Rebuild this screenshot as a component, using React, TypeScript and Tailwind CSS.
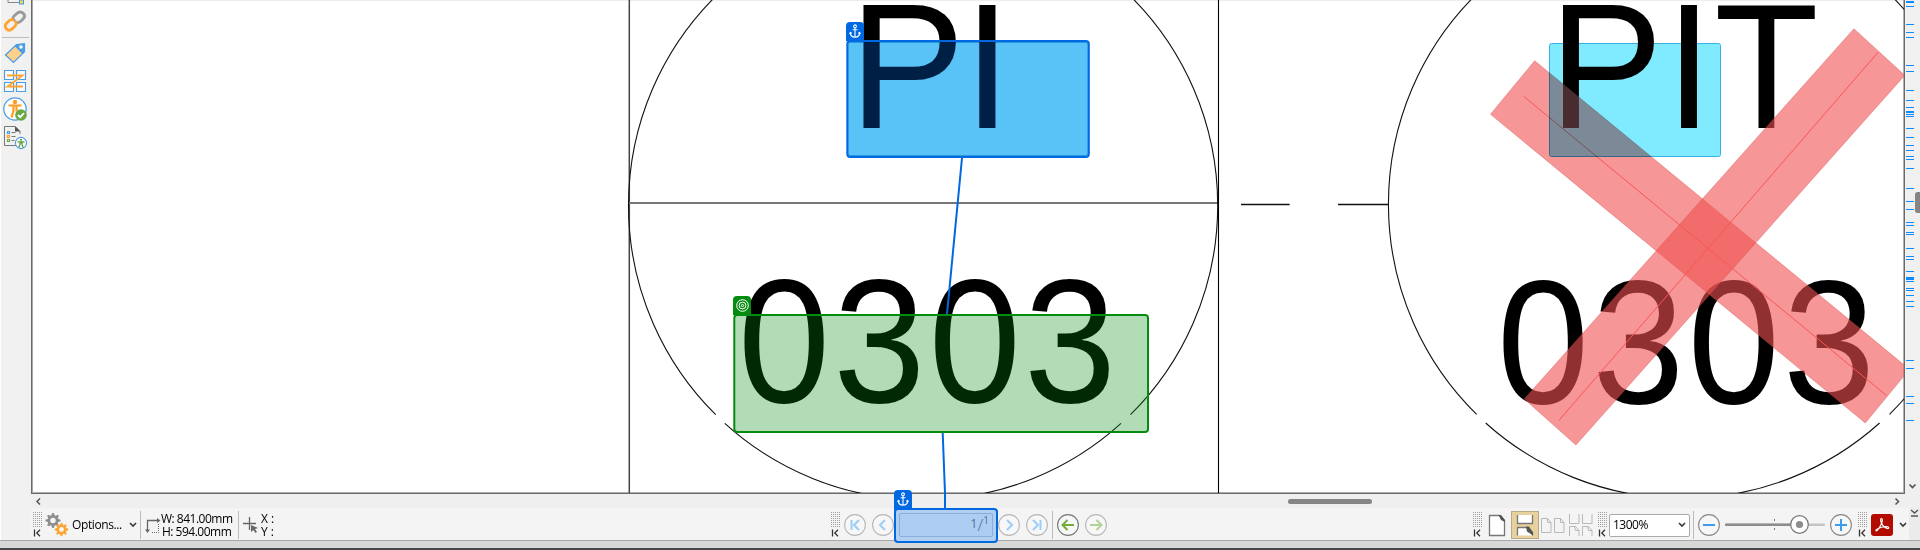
import React from 'react';

const RULER_MARKS: [number, number][] = [
  [1, 2], [6, 1], [24, 1], [32, 1], [37, 1], [65, 1], [71, 1], [90, 1], [100, 1], [107, 1],
  [111, 2], [114, 1], [116, 1], [128, 1], [137, 1], [145, 1], [150, 1], [156, 1], [159, 1],
  [168, 1], [188, 1], [201, 1], [209, 1], [222, 1], [225, 1], [232, 1], [234, 1], [248, 1],
  [256, 1], [259, 1], [271, 1], [277, 3], [281, 1], [288, 1], [290, 1], [295, 1], [301, 1],
  [306, 1], [360, 1], [368, 1], [396, 1], [403, 1], [420, 1],
];

function Anchor() {
  return (
    <svg width="12" height="15" viewBox="0 0 12 15" fill="none" stroke="#fff" strokeWidth="1.1">
      <circle cx="6" cy="2.3" r="1.4" />
      <path d="M6 3.7v9.6M3.6 5.8h4.8M1.2 8.6c.2 3 2 4.5 4.8 4.7 2.8-.2 4.6-1.700 4.800-4.700M.6 9.900l.7-1.500 1.500.8M11.400 9.900l-.7-1.500-1.500.8" />
    </svg>
  );
}

function Grip() {
  return (
    <svg className="shrink-0" width="10" height="32" viewBox="0 0 10 32">
      {[0, 1, 2, 3, 4, 5, 6, 7].map((r) =>
        [0, 1, 2, 3, 4].map((c) => (
          <rect key={`${r}-${c}`} x={c * 2} y={3 + r * 2} width="1" height="1" fill="#a0a0a0" />
        )),
      )}
      <path d="M1.500 20.500v7M7 20.800l-3.200 3.200L7 27.200" fill="none" stroke="#333" strokeWidth="1.300" />
    </svg>
  );
}

function Chevron({ className = '' }: { className?: string }) {
  return (
    <svg className={`shrink-0 ${className}`} width="8" height="8" viewBox="0 0 8 8" fill="none" stroke="#3c3c3c" strokeWidth="1.700">
      <path d="M1 2l3 3 3-3" />
    </svg>
  );
}

function RoundButton({ d, color, ring = '#b8b8b8', className = '' }: { d: string; color: string; ring?: string; className?: string }) {
  return (
    <svg className={`shrink-0 ${className}`} width="22" height="22" viewBox="0 0 22 22" fill="none">
      <circle cx="11" cy="11" r="10.400" fill="#f7f7f7" stroke={ring} strokeWidth="1.100" />
      <path d={d} stroke={color} strokeWidth="2" />
    </svg>
  );
}

function Sep({ className = '' }: { className?: string }) {
  return <div className={`h-7 w-px shrink-0 bg-[#bcbcbc] ${className}`} />;
}

function gearPath(cx: number, cy: number, r: number) {
  const pts: string[] = [];
  for (let i = 0; i < 32; i++) {
    const a = ((i - 0.5) / 32) * Math.PI * 2;
    const rad = i % 4 < 2 ? r : r * 0.72;
    pts.push(`${(cx + Math.cos(a) * rad).toFixed(2)} ${(cy + Math.sin(a) * rad).toFixed(2)}`);
  }
  const h = r * 0.36;
  return `M${pts.join('L')}ZM${cx - h} ${cy}a${h} ${h} 0 1 0 ${h * 2} 0a${h} ${h} 0 1 0 ${-h * 2} 0Z`;
}

function Sidebar() {
  return (
    <div className="w-[31px] shrink-0 border-l border-white bg-[#f1f1f1]">
      <svg width="30" height="155" viewBox="1 0 30 155" fill="none">
        <path d="M8 0v2.500h11" stroke="#888" />
        <rect x="19.500" y="0" width="4" height="4" fill="#ffd84d" stroke="#3f9ae8" />
        <g strokeWidth="2.800" strokeLinecap="round" transform="translate(0 .5)">
          <path d="M14.200 19.800c-1.800-1.600-1.600-3 .1-4.600l3-2.600c2-1.500 4.200-1.400 5.900.2 1.700 1.700 1.600 3.900 0 5.600l-2.800 2.600c-1.300 1.100-2.600 1.300-3.900.8" stroke="#9a9a9a" />
          <path d="M13 19.200c-1.500-.4-2.700 0-3.900 1.100l-2.600 2.500c-1.700 1.800-1.700 4 0 5.600 1.600 1.600 3.900 1.500 5.700 0l2.700-2.600c1.400-1.400 1.700-2.700.9-4" stroke="#ffa42e" />
        </g>
        <path d="M2 37.500h27" stroke="#bcbcbc" />
        <path d="M5.500 55L16.500 44.500l8-.8v8L13.500 62.500Z" fill="#ffd08a" stroke="#4a9de6" strokeWidth="1.200" />
        <path d="M14.500 46L16.500 44.500l8-.8v8L22.500 54Z" fill="#4a9de6" />
        <circle cx="21" cy="47" r="1.800" fill="#fff" />
        <g fill="#fafafa" stroke="#4a9de6" strokeWidth="1.100">
          <path d="M4.500 70.500h9v9h-9zM16.500 70.500h9v9h-9zM4.500 82.500h9v9h-9zM16.500 82.500h9v9h-9z" />
        </g>
        <path d="M7 75.500h15.500L7.500 86.500h15.500" stroke="#ffa42e" strokeWidth="1.800" />
        <circle cx="15" cy="109" r="11.200" fill="#fff" stroke="#4a9de6" strokeWidth="1.200" />
        <circle cx="15" cy="102" r="2.200" fill="#ff9c22" />
        <path d="M8.500 105.500h13M13.500 105.500v5l-2 7M16.500 105.500v6" stroke="#ff9c22" strokeWidth="2.200" />
        <circle cx="21" cy="115" r="5.800" fill="#6aa844" />
        <path d="M18 115l2.200 2.200 3.800-4" stroke="#fff" strokeWidth="1.800" />
        <path d="M15 126.500H4.500v19H17M20 131.500V134M15 126.500l5 5" stroke="#777" />
        <path d="M15 126l5.500 5.500H15Z" fill="#555" />
        <g strokeWidth="1.100">
          <path d="M7.500 131.500h2v2h-2z" stroke="#3f9ae8" />
          <path d="M7.500 135.500h2v2h-2z" stroke="#ff9c22" />
          <path d="M7.500 139.500h2v2h-2z" stroke="#6aa844" />
          <path d="M11.500 132.500h4M11.500 136.500h4M11.500 140.500h3" stroke="#777" />
        </g>
        <circle cx="21" cy="143" r="5.600" fill="#fff" stroke="#4a9de6" strokeWidth="1.100" />
        <circle cx="21" cy="139.800" r="1.100" fill="#5da33c" />
        <path d="M17.500 141.800h7M21 141.500v2M20 142v2.500l-1.200 3M22 142v2.500l1.200 3" stroke="#5da33c" strokeWidth="1.300" />
      </svg>
    </div>
  );
}

function Drawing() {
  return (
    <svg className="block" width="1871" height="493" viewBox="33 0 1871 493">
      <g fill="none" stroke="#111" strokeWidth="1.100">
        <path d="M629.300 0V493" stroke="#444" strokeWidth="1.500" />
        <path d="M1218.500 0V493" stroke="#000" />
        <path d="M629 203H1218" stroke="#777" strokeWidth="2" />
        <path d="M715.700 414.700A294.600 294.600 0 1 1 1130.500 414.700" />
        <path d="M724.800 423.300A294.600 294.600 0 0 0 1121 423.300" />
        <path d="M1476.600 414.300A294.600 294.600 0 1 1 1889.500 414.300" />
        <path d="M1485.700 423A294.600 294.600 0 0 0 1879.600 423" />
        <path d="M1241 204.500h48.600M1338 204.500h50" strokeWidth="1.300" />
      </g>
      <g className="font-['Liberation_Sans',Arial,sans-serif]" fontSize="179" fill="#000">
        <text transform="translate(849.200 128.300) scale(.97 1)" x="0 117.500">PI</text>
        <text transform="translate(738 402.200) scale(.925 .988)" x="0 103.100 206.200 309.300">0303</text>
        <text transform="translate(1549 128.300) scale(.955 1)" x="0 121.700 173">PIT</text>
        <text transform="translate(1497 403.200) scale(.925 .988)" x="0 103.100 206.200 309.300">0303</text>
      </g>
      <g fill="#f05050" fillOpacity=".6" stroke="#d04545" strokeOpacity=".35">
        <path d="M1534.700 60.700L1490.500 114.300L1865.300 423L1909.500 369.400Z" />
        <path d="M1853.900 28.700L1904.800 75.300L1575.900 445L1524.300 399Z" />
      </g>
      <path d="M1523.600 96.300L1886.700 395.700M1878 52.300L1559 420.300" stroke="#fb5555" fill="none" />
      <rect className="mix-blend-multiply" x="1549.500" y="43.500" width="171" height="113" rx="2" fill="#80eaff" stroke="#38b0e4" />
      <rect className="mix-blend-multiply" x="848" y="42.500" width="240" height="113" rx="2" fill="#80eaff" stroke="#38b0e4" />
      <rect x="847.300" y="41" width="241.500" height="116" rx="3" fill="#0068e5" fillOpacity=".3" stroke="#0068e0" strokeWidth="2" />
      <rect x="734.300" y="315" width="413.700" height="117" rx="3" fill="#008c0a" fillOpacity=".3" stroke="#058c10" strokeWidth="2" />
      <path d="M962 158L947 314M942.700 433L945 493" stroke="#0068e0" strokeWidth="2" />
    </svg>
  );
}

function LeftTools() {
  return (
    <div className="flex w-[798px] shrink-0 items-center">
      <Grip />
      <svg className="ml-[2px] shrink-0" width="24" height="24" viewBox="0 0 24 24" fillRule="evenodd">
        <path d={gearPath(8, 7.5, 7.600)} fill="#8e8e8e" />
        <path d={gearPath(16.500, 16.5, 6.800)} fill="#ffa42e" />
      </svg>
      <span className="ml-[3px] w-[52px] text-[12px] tracking-[-0.4px] whitespace-nowrap">Options...</span>
      <Chevron className="ml-[5px]" />
      <Sep className="ml-[3px]" />
      <svg className="ml-1 shrink-0" width="16" height="18" viewBox="0 0 16 18" fill="none" stroke="#666">
        <path d="M2.500 14V4.500H13" strokeWidth="1.300" />
        <path d="M12 2l3.500 2.500L12 7ZM0 13.500h5L2.500 17Z" fill="#666" stroke="none" />
        <path d="M13.500 8v8.500H6" strokeDasharray="1 1" />
      </svg>
      <div className="flex w-[77px] flex-col text-[12px] leading-[13px] tracking-[-0.5px] whitespace-nowrap">
        <span>W: 841.00mm</span>
        <span className="pl-px">H: 594.00mm</span>
      </div>
      <Sep />
      <svg className="ml-1 shrink-0" width="16" height="20" viewBox="0 0 16 20" fill="none" stroke="#666" strokeWidth="1.300">
        <path d="M6.500 2v13M0 8.500h13" />
        <path d="M8 10l7 3-3 1 2 3-1.500 1-2-3L8 17Z" fill="#666" stroke="none" />
      </svg>
      <div className="ml-[2px] flex flex-col text-[12px] leading-[13px]">
        <span>X :</span>
        <span>Y :</span>
      </div>
    </div>
  );
}

function PageNav() {
  return (
    <div className="flex w-[642px] shrink-0 items-center">
      <Grip />
      <RoundButton className="ml-[3px]" color="#9dcdf6" d="M7.500 6v10M15 6l-5 5 5 5" />
      <RoundButton className="ml-[6px]" color="#9dcdf6" d="M13 6l-5 5 5 5" />
      <div className="relative h-[35px] w-[104px] shrink-0 rounded border-2 border-[#0068e0] bg-[#b0cff3] p-[3px]">
        <div className="flex h-[24px] items-center justify-end rounded-[2px] border border-[#8baed6] bg-[#adcdf2] pr-[3px] text-[12.500px] text-[#56708f]">
          1<span className="text-[17px] font-light">/</span><sup className="text-[10px]">1</sup>
        </div>
        <div className="absolute top-[-20px] left-[-2px] flex h-[20px] w-[18px] items-center justify-center rounded-t bg-[#0068e0]">
          <Anchor />
        </div>
        <div className="absolute top-[-18px] left-[48px] h-[18px] w-[2px] bg-[#0068e0]" />
      </div>
      <RoundButton className="" color="#9dcdf6" d="M9 6l5 5-5 5" />
      <RoundButton className="ml-[6px]" color="#9dcdf6" d="M7 6l5 5-5 5M14.500 6v10" />
      <Sep className="ml-[4px]" />
      <RoundButton className="ml-[4px]" ring="#777" color="#72ad3c" d="M17 11H6M10.500 6L5.500 11l5 5" />
      <RoundButton className="ml-[6px]" color="#b4d398" d="M5 11h11M11.500 6l5 5-5 5" />
    </div>
  );
}

function ViewTools() {
  return (
    <div className="flex items-center">
      <Grip />
      <svg className="ml-[5px] shrink-0" width="18" height="23" viewBox="0 0 18 23">
        <path d="M1.500 1.500H12l4.500 5v15h-15Z" fill="#fff" stroke="#777" strokeWidth="1.300" />
        <path d="M10.500 1H13l4 5v2L13 6Z" fill="#555" />
      </svg>
      <div className="ml-[5px] flex h-7 w-7 shrink-0 items-center justify-center border border-[#b8ab8a] bg-[#e7d19c]">
        <svg width="18" height="24" viewBox="0 0 18 24">
          <path d="M1.500 2h15v8.500h-15Z" fill="#fff" />
          <path d="M1.500 2v8.500h15V2" fill="none" stroke="#777" strokeWidth="1.300" />
          <path d="M1.500 22.500V14.500h10l5 5v3" fill="#fff" stroke="#777" strokeWidth="1.300" />
          <path d="M10 13.500h3l4 6v3L11 18.500Z" fill="#555" />
        </svg>
      </div>
      <svg className="ml-[2px] shrink-0" width="24" height="17" viewBox="0 0 24 17" fill="none" stroke="#b8b8b8">
        <path d="M.5 1.500h6l3.500 4v10H.5ZM6.500 1.500v4H10M13.500 1.500h6l3.500 4v10h-9.500ZM19.500 1.500v4H23" />
      </svg>
      <svg className="ml-[4px] shrink-0" width="24" height="24" viewBox="0 0 24 24" fill="none" stroke="#b8b8b8">
        <path d="M.5 1v9.500H10V1M13.500 1v9.500H23V1M.5 23v-9.500h6l3.500 4V23M13.500 23v-9.500h6l3.500 4V23M5.500 13.500l1 4H10M18.500 13.500l1 4H23" />
      </svg>
      <div className="ml-[5px] flex"><Grip /></div>
      <div className="ml-px flex h-[23px] w-[81px] shrink-0 items-center justify-between rounded-[2px] border border-[#aaa] bg-white pr-[3px] pl-[3px] text-[12px] tracking-[-0.500px]">
        1300%
        <Chevron />
      </div>
      <Sep className="ml-[3px]" />
      <RoundButton className="ml-[4px]" ring="#888" color="#3b9cf0" d="M5 11h12" />
      <svg className="ml-[5px] shrink-0" width="100" height="22" viewBox="0 0 100 22">
        <rect y="9.500" width="100" height="2.500" rx="1" fill="#c4c4c4" />
        <rect y="9.500" width="70" height="2.500" rx="1" fill="#8c8c8c" />
        <path d="M49.500 5v2M49.500 14v2" stroke="#777" />
        <circle cx="74.500" cy="10.500" r="8.800" fill="#fff" stroke="#777" strokeWidth="1.200" />
        <circle cx="74.500" cy="10.500" r="3.600" fill="#8c8c8c" />
      </svg>
      <RoundButton className="ml-[5px]" ring="#888" color="#3b9cf0" d="M5 11h12M11 5v12" />
      <div className="ml-[6px] flex"><Grip /></div>
      <svg className="ml-[3px] shrink-0" width="22" height="22" viewBox="0 0 22 22" fill="none">
        <rect width="22" height="22" rx="3" fill="#b30b00" />
        <path d="M10.500 4.500c-1.500 0-.8 3 0 4.500 1.500 3 3.500 5 6 5.500 2 .3 1.500-1.700-.5-1.800-3-.2-7 .6-10 2.500-2.200 1.400-.6 2.500.7.800C8.500 13.500 11 9 11.300 6.500c.1-1-.2-2-.8-2Z" stroke="#fff" strokeWidth="1.200" />
      </svg>
      <Chevron className="ml-[6px]" />
    </div>
  );
}

export default function App() {
  return (
    <div className="flex h-[550px] w-[1920px] flex-col overflow-hidden bg-[#f1f1f1] font-['Open_Sans','Noto_Sans',sans-serif] text-black">
      <div className="flex h-[540px]">
        <Sidebar />
        <div className="flex w-[1889px] flex-col">
          <div className="flex h-[494px]">
            <div className="relative h-[494px] w-[1874px] shrink-0 border-x border-b border-[#6a6a6a] bg-white pl-px shadow-[inset_0_-1px_0_#b0b0b0,inset_1px_0_0_#a8a8a8,inset_-1px_0_0_#b0b0b0,inset_0_0_2px_#bbb]">
              <Drawing />
              <div className="absolute top-[22px] left-[814px] flex h-[19px] w-[18px] items-center justify-center rounded-t bg-[#0068e0]">
                <Anchor />
              </div>
              <div className="absolute top-[296px] left-[701px] flex h-[19px] w-[18px] items-center justify-center rounded-t bg-[#058c10]">
                <svg width="13" height="13" viewBox="0 0 13 13" fill="none" stroke="#fff">
                  <circle cx="6.500" cy="6.500" r="5.800" />
                  <circle cx="6.500" cy="6.500" r="3.400" />
                  <circle cx="6.500" cy="6.500" r="1.100" />
                </svg>
              </div>
            </div>
            <div className="w-[15px] bg-[#f0f0f0]">
              <svg width="15" height="494" viewBox="0 0 15 494">
                {RULER_MARKS.map(([y, h]) => (
                  <rect key={y} x="1" y={y} width="8" height={h} fill="#0a8cff" />
                ))}
                <rect x="10" y="192" width="8" height="21" rx="2.500" fill="#858585" />
                <path d="M4.500 484.500l3 3 3-3" fill="none" stroke="#555" strokeWidth="1.700" />
              </svg>
            </div>
          </div>
          <div className="flex h-[14px] items-center bg-[#efefef]">
            <svg width="1889" height="14" viewBox="31 0 1889 14">
              <path d="M40 4.500l-3 3 3 3M1895.500 4.500l3 3-3 3" fill="none" stroke="#555" strokeWidth="1.500" />
              <rect x="1288" y="5" width="84" height="5" rx="2.500" fill="#858585" />
            </svg>
          </div>
          <div className="flex h-8 items-center bg-[#f4f4f4]">
            <div className="flex h-8 w-[1878px] shrink-0 items-center pt-[2px] pl-[2px]">
              <div className="flex h-8 items-center">
                <LeftTools />
                <PageNav />
                <ViewTools />
              </div>
            </div>
            <div className="h-8 w-[11px] bg-[#ebebeb]">
              <svg width="11" height="12" viewBox="0 0 11 12" fill="none" stroke="#555" strokeWidth="1.400">
                <path d="M2 2l3.500 3L9 2M2 8h7" />
              </svg>
            </div>
          </div>
        </div>
      </div>
      <div className="h-2 border-t border-[#a8a8a8] bg-[#d8d8d8]" />
      <div className="h-[2px] bg-[#484848]" />
    </div>
  );
}
